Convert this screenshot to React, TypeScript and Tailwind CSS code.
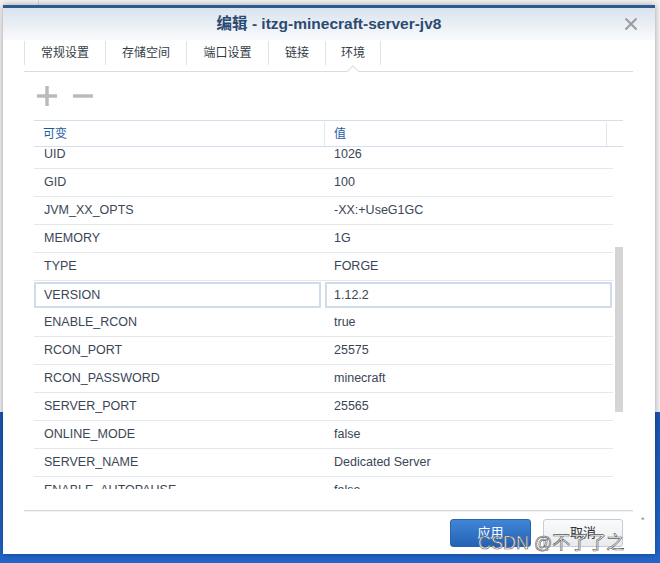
import { Fragment } from "react";

const rows: [string, string][] = [
  ["UID", "1026"],
  ["GID", "100"],
  ["JVM_XX_OPTS", "-XX:+UseG1GC"],
  ["MEMORY", "1G"],
  ["TYPE", "FORGE"],
  ["VERSION", "1.12.2"],
  ["ENABLE_RCON", "true"],
  ["RCON_PORT", "25575"],
  ["RCON_PASSWORD", "minecraft"],
  ["SERVER_PORT", "25565"],
  ["ONLINE_MODE", "false"],
  ["SERVER_NAME", "Dedicated Server"],
  ["ENABLE_AUTOPAUSE", "false"],
];

const tabs = [
  { label: "常规设置", w: "w-[81px]" },
  { label: "存储空间", w: "w-[81px]" },
  { label: "端口设置", w: "w-[82px]" },
  { label: "链接", w: "w-[57px]" },
  { label: "环境", w: "w-[56px]", active: true },
];

function CloseIcon() {
  return (
    <svg width="14" height="14" viewBox="0 0 14 14">
      <path d="M1.5 1.5 L12.5 12.5 M12.5 1.5 L1.5 12.5" stroke="#9b9b9b" strokeWidth="2" />
    </svg>
  );
}

function PlusIcon() {
  return (
    <svg width="20" height="20" viewBox="0 0 20 20">
      <path d="M10 0 V20 M0 10 H20" stroke="#b7bbc0" strokeWidth="3.5" />
    </svg>
  );
}

function MinusIcon() {
  return (
    <svg width="20" height="20" viewBox="0 0 20 20">
      <path d="M0 10 H20" stroke="#b7bbc0" strokeWidth="3.5" />
    </svg>
  );
}

function EnvRow({ name, value }: { name: string; value: string }) {
  if (name === "VERSION") {
    return (
      <div className="flex h-[28px] gap-[4px] py-[1px]">
        <div className="flex w-[287px] items-center border-2 border-[#cfdcec] pl-[8px]">{name}</div>
        <div className="flex w-[287px] items-center border-2 border-[#cfdcec] pl-[7px]">{value}</div>
      </div>
    );
  }
  return (
    <div className="flex h-[28px] items-center border-b border-[#e4e8ec]">
      <div className="w-[291px] pl-[10px]">{name}</div>
      <div className="pl-[9px]">{value}</div>
    </div>
  );
}

export default function App() {
  return (
    <div className="relative flex h-[563px] w-[660px] flex-col overflow-hidden font-['Liberation_Sans','Noto_Sans_CJK_SC',sans-serif]">
      <div className="h-[412px] bg-[#f2f2f2]">
        <div className="ml-[38px] h-full w-px bg-[#d6d6d6]" />
      </div>
      <div className="flex-1 bg-gradient-to-b from-[#1a55b3] to-[#2265c8]" />

      <div className="absolute left-[3px] top-[5px] flex h-[549px] w-[652px] flex-col border-t-[3px] border-[#2c5a92] bg-white shadow-[0_0_6px_rgba(0,0,0,0.35)]">
        <div className="grid h-[32px] grid-cols-[40px_1fr_40px] items-center bg-gradient-to-b from-[#dae3ed] to-[#f9fafc]">
          <div />
          <div className="text-center text-[15.5px] font-bold text-[#2b4a72]">
            编辑 - itzg-minecraft-server-jv8
          </div>
          <div className="flex pl-[9px]">
            <CloseIcon />
          </div>
        </div>

        <div className="relative ml-[21px] mr-[22px] flex h-[32px] border-b border-[#d8dce1]">
          {tabs.map((t, i) => (
            <div
              key={t.label}
              className={`relative mt-[1px] flex h-[24px] items-center justify-center border-l border-[#dce2e9] text-[12px] text-[#333c47] ${t.w} ${
                i === tabs.length - 1 ? "border-r" : ""
              }`}
            >
              {t.label}
              {t.active && (
                <span className="absolute bottom-[-11px] left-1/2 h-[9px] w-[9px] -translate-x-1/2 rotate-45 border-l border-t border-[#d8dce1] bg-white" />
              )}
            </div>
          ))}
        </div>

        <div className="ml-[31px] mr-[32px] flex flex-col">
          <div className="flex h-[48px] items-center gap-[16px] pl-[3px]">
            <PlusIcon />
            <MinusIcon />
          </div>

          <div className="flex h-[27px] border-b border-t border-[#d3dfec] pt-[1px] text-[12px] text-[#1f5c9d]">
            <div className="flex w-[291px] items-center border-r border-[#dfe7f0] pl-[9px]">可变</div>
            <div className="flex w-[282px] items-center border-r border-[#dfe7f0] pl-[9px]">值</div>
            <div className="flex-1" />
          </div>

          <div className="flex h-[342px] overflow-hidden text-[12.5px] text-[#3a4656]">
            <div className="-mt-[6px] w-[579px] shrink-0">
              {rows.map(([k, v]) => (
                <Fragment key={k}>
                  <EnvRow name={k} value={v} />
                </Fragment>
              ))}
            </div>
            <div className="flex-1 pl-[2px] pt-[100px]">
              <div className="h-[165px] w-[8px] bg-[#d5d5d5]" />
            </div>
          </div>
        </div>

        <div className="ml-[21px] mr-[22px] mt-[21px] h-[2px] border-t border-[#d6dadf] bg-[#f1f2f4]" />

        <div className="mr-[32px] mt-[7px] flex justify-end gap-[12px] text-[13px]">
          <button className="h-[28px] w-[81px] rounded-[3px] border border-[#2a64b0] bg-gradient-to-b from-[#4186d6] to-[#2462b6] text-white">
            应用
          </button>
          <button className="h-[28px] w-[80px] rounded-[3px] border border-[#c6ccd4] bg-gradient-to-b from-[#fafbfc] to-[#e8ebef] text-[#333]">
            取消
          </button>
        </div>
      </div>

      <div className="absolute left-[478px] top-[530px] text-[18px] text-white/90 [-webkit-text-stroke:0.6px_#5a5a5a]">
        CSDN @不了了之
      </div>
      <div className="absolute left-[641px] top-[514px] text-[9px] text-[#888]">*</div>
    </div>
  );
}
